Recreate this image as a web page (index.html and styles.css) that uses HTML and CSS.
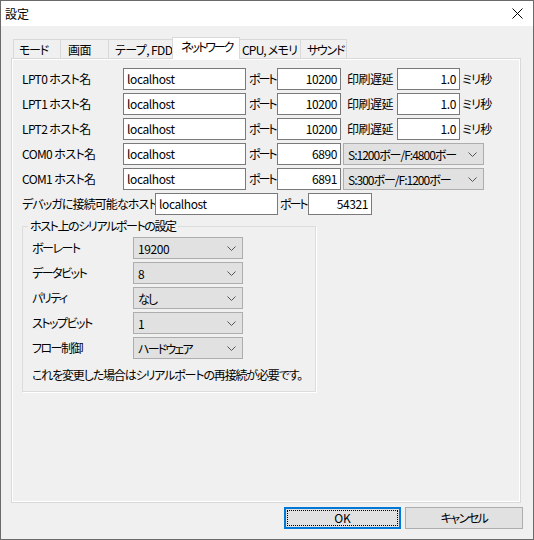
FILE: index.html
```html
<!DOCTYPE html>
<html lang="ja">
<head>
<meta charset="utf-8">
<link rel="stylesheet" href="styles.css">
</head>
<body>
<div class="window">
  <div class="titlebar">
    <span class="title">設定</span>
    <svg class="close" width="11" height="11" viewBox="0 0 11 11"><path d="M0.5 0.5 L10.5 10.5 M10.5 0.5 L0.5 10.5" stroke="#000" stroke-width="1" fill="none"/></svg>
  </div>
  <div class="tabs">
    <div class="tab w1">モード</div>
    <div class="tab w2">画面</div>
    <div class="tab w3">テープ, FDD</div>
    <div class="tab sel">ネットワーク</div>
    <div class="tab w5">CPU, メモリ</div>
    <div class="tab w6">サウンド</div>
  </div>
  <div class="panel">
    <div class="rows">
      <div class="row">
        <span class="lbl lw1">LPT0 ホスト名</span>
        <span class="input host">localhost</span>
        <span class="lbl port">ポート</span>
        <span class="input num">10200</span>
        <span class="lbl delay">印刷遅延</span>
        <span class="input num dl">1.0</span>
        <span class="lbl ms">ミリ秒</span>
      </div>
      <div class="row">
        <span class="lbl lw1">LPT1 ホスト名</span>
        <span class="input host">localhost</span>
        <span class="lbl port">ポート</span>
        <span class="input num">10200</span>
        <span class="lbl delay">印刷遅延</span>
        <span class="input num dl">1.0</span>
        <span class="lbl ms">ミリ秒</span>
      </div>
      <div class="row">
        <span class="lbl lw1">LPT2 ホスト名</span>
        <span class="input host">localhost</span>
        <span class="lbl port">ポート</span>
        <span class="input num">10200</span>
        <span class="lbl delay">印刷遅延</span>
        <span class="input num dl">1.0</span>
        <span class="lbl ms">ミリ秒</span>
      </div>
      <div class="row">
        <span class="lbl lw1">COM0 ホスト名</span>
        <span class="input host">localhost</span>
        <span class="lbl port">ポート</span>
        <span class="input num">6890</span>
        <span class="combo wide"><span class="ctext">S:1200ボー/F:4800ボー</span><svg class="chev" width="9" height="5" viewBox="0 0 9 5"><path d="M0.5 0.5 L4.5 4.5 L8.5 0.5" stroke="#555" fill="none"/></svg></span>
      </div>
      <div class="row">
        <span class="lbl lw1">COM1 ホスト名</span>
        <span class="input host">localhost</span>
        <span class="lbl port">ポート</span>
        <span class="input num">6891</span>
        <span class="combo wide"><span class="ctext">S:300ボー/F:1200ボー</span><svg class="chev" width="9" height="5" viewBox="0 0 9 5"><path d="M0.5 0.5 L4.5 4.5 L8.5 0.5" stroke="#555" fill="none"/></svg></span>
      </div>
      <div class="row">
        <span class="lbl lw2">デバッガに接続可能なホスト</span>
        <span class="input host">localhost</span>
        <span class="lbl port2">ポート</span>
        <span class="input num">54321</span>
      </div>
    </div>
    <fieldset class="group">
      <legend>ホスト上のシリアルポートの設定</legend>
      <div class="ginner">
        <div class="row">
          <span class="lbl glbl">ボーレート</span>
          <span class="combo small"><span class="ctext">19200</span><svg class="chev" width="9" height="5" viewBox="0 0 9 5"><path d="M0.5 0.5 L4.5 4.5 L8.5 0.5" stroke="#555" fill="none"/></svg></span>
        </div>
        <div class="row">
          <span class="lbl glbl">データビット</span>
          <span class="combo small"><span class="ctext">8</span><svg class="chev" width="9" height="5" viewBox="0 0 9 5"><path d="M0.5 0.5 L4.5 4.5 L8.5 0.5" stroke="#555" fill="none"/></svg></span>
        </div>
        <div class="row">
          <span class="lbl glbl">パリティ</span>
          <span class="combo small"><span class="ctext kana">なし</span><svg class="chev" width="9" height="5" viewBox="0 0 9 5"><path d="M0.5 0.5 L4.5 4.5 L8.5 0.5" stroke="#555" fill="none"/></svg></span>
        </div>
        <div class="row">
          <span class="lbl glbl">ストップビット</span>
          <span class="combo small"><span class="ctext">1</span><svg class="chev" width="9" height="5" viewBox="0 0 9 5"><path d="M0.5 0.5 L4.5 4.5 L8.5 0.5" stroke="#555" fill="none"/></svg></span>
        </div>
        <div class="row">
          <span class="lbl glbl">フロー制御</span>
          <span class="combo small"><span class="ctext kana">ハードウェア</span><svg class="chev" width="9" height="5" viewBox="0 0 9 5"><path d="M0.5 0.5 L4.5 4.5 L8.5 0.5" stroke="#555" fill="none"/></svg></span>
        </div>
        <p class="note">これを変更した場合はシリアルポートの再接続が必要です。</p>
      </div>
    </fieldset>
  </div>
  <div class="buttons">
    <div class="btn ok"><span class="focus">OK</span></div>
    <div class="btn cancel">キャンセル</div>
  </div>
</div>
</body>
</html>
```
FILE: styles.css
```css
* { box-sizing: border-box; }
html, body { margin: 0; padding: 0; }
body {
  font-family: "Noto Sans CJK JP", "Noto Sans", sans-serif;
  font-feature-settings: "palt";
  font-size: 12px;
  letter-spacing: -0.4px;
  color: #000;
  background: #f0f0f0;
}
.window {
  width: 534px;
  height: 540px;
  border: 1px solid #6a6a6a;
  background: #f0f0f0;
  display: flex;
  flex-direction: column;
}
.titlebar {
  height: 25px;
  background: #fff;
  display: flex;
  align-items: center;
  justify-content: space-between;
  padding: 0 10px 0 4px;
  flex: none;
}
.title { font-size: 12px; line-height: 16px; letter-spacing: 0; }
.close { display: block; }
.tabs {
  margin-top: 11px;
  height: 21px;
  padding-left: 12px;
  display: flex;
  align-items: flex-end;
  flex: none;
  position: relative;
  z-index: 2;
}
.tab {
  height: 19px;
  border: 1px solid #d9d9d9;
  border-bottom: none;
  background: #f0f0f0;
  padding-left: 5px;
  line-height: 19px;
  white-space: nowrap;
  margin-right: -1px;
  letter-spacing: -1.3px;
  overflow: hidden;
}
.w1 { width: 48px; }
.w2 { width: 49px; padding-left: 7px; letter-spacing: -0.5px; }
.w3 { width: 66px; padding-left: 6px; letter-spacing: -0.6px; }
.w5 { width: 63px; padding-left: 4px; letter-spacing: -0.8px; }
.w6 { width: 47px; padding-left: 6px; }
.tab.sel {
  height: 22px;
  width: 68px;
  margin-left: -1px;
  margin-right: -2px;
  margin-bottom: -1px;
  background: #fff;
  padding-left: 8px;
  line-height: 18px;
  letter-spacing: -2px;
  position: relative;
  z-index: 3;
}
.tab.sel + .tab { border-left: none; }
.panel {
  margin: 0 12px 0 10px;
  height: 445px;
  border: 1px solid #d9d9d9;
  box-shadow: inset 1px 1px 0 #fff, inset -1px -1px 0 #fff;
  background: #f0f0f0;
  padding: 9px 10px 0 10px;
  flex: none;
}
.rows {
  display: flex;
  flex-direction: column;
  gap: 3px;
}
.row {
  display: flex;
  align-items: center;
  height: 22px;
}
.lbl {
  line-height: 22px;
  white-space: nowrap;
  flex: none;
}
.lw1 { width: 101px; letter-spacing: -0.6px; }
.lw2 { width: 133px; letter-spacing: -0.9px; }
.port { width: 31px; padding-left: 3px; letter-spacing: -2px; }
.port2 { width: 30px; padding-left: 2px; letter-spacing: -2px; }
.delay { width: 56px; padding-left: 6px; letter-spacing: -0.5px; }
.ms { padding-left: 2px; letter-spacing: -0.7px; }
.input {
  flex: none;
  height: 22px;
  border: 1px solid #7a7a7a;
  background: #fff;
  padding: 0 3px;
  line-height: 20px;
  white-space: nowrap;
}
.host { width: 123px; }
.num { width: 64px; text-align: right; }
.num.dl { width: 63px; }
.combo {
  flex: none;
  height: 22px;
  border: 1px solid #adadad;
  background: #e1e1e1;
  display: flex;
  align-items: center;
  justify-content: space-between;
  padding: 0 6px 0 4px;
  white-space: nowrap;
  letter-spacing: -0.4px;
}
.combo.wide { width: 141px; margin-left: 2px; letter-spacing: -1px; }
.combo.small { width: 110px; }
.ctext.kana { letter-spacing: -1.8px; }
.chev { display: block; flex: none; }
.group {
  margin: 3px 0 0 0;
  padding: 0;
  width: 294px;
  border: 1px solid #dcdcdc;
  box-shadow: 1px 1px 0 #fff;
}
.group legend {
  margin-left: 5px;
  padding: 0 2px;
  line-height: 16px;
  font-size: 12px;
  letter-spacing: -1.4px;
}
.ginner {
  padding: 3px 0 8px 9px;
  display: flex;
  flex-direction: column;
  gap: 3px;
}
.glbl { width: 101px; letter-spacing: -1.5px; }
.note {
  margin: 5px 0 0 0;
  line-height: 16px;
  white-space: nowrap;
  letter-spacing: -1.15px;
}
.buttons {
  margin-top: 4px;
  display: flex;
  justify-content: flex-end;
  gap: 4px;
  padding-right: 10px;
  flex: none;
}
.btn {
  height: 22px;
  width: 118px;
  background: #e1e1e1;
  border: 1px solid #adadad;
  display: flex;
  align-items: center;
  justify-content: center;
  line-height: 16px;
  letter-spacing: -1.5px;
}
.btn.ok {
  width: 117px;
  border: 2px solid #0078d7;
  padding: 1px;
  letter-spacing: 0;
}
.focus {
  width: 100%;
  height: 100%;
  border: 1px dotted #000;
  display: flex;
  align-items: center;
  justify-content: center;
}
```
